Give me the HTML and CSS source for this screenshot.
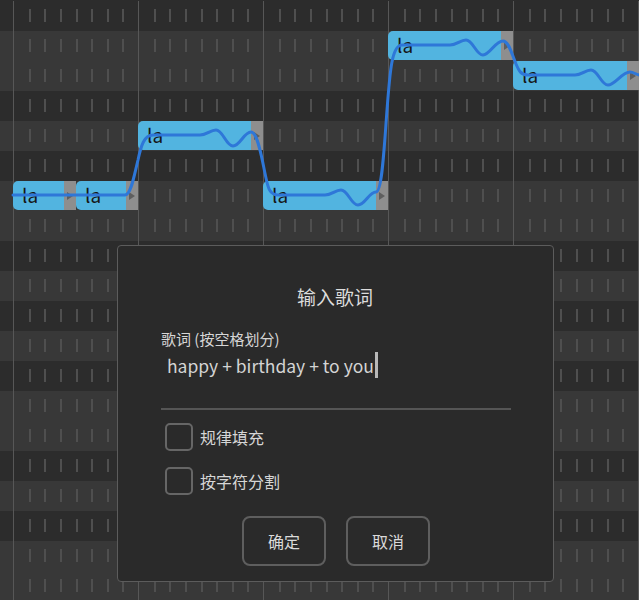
FILE: index.html
```html
<!DOCTYPE html>
<html lang="zh-CN">
<head>
    <meta charset="UTF-8">
    <meta name="viewport" content="width=device-width, initial-scale=1.0">
    <title>输入歌词</title>
    <link rel="stylesheet" href="styles.css">
</head>
<body>

    <div class="roll">
        <!-- 钢琴卷帘的背景行 (黑键 / 白键) -->
        <div class="rows">
            <div class="row black"></div>
            <div class="row"></div>
            <div class="row"></div>
            <div class="row black"></div>
            <div class="row"></div>
            <div class="row black"></div>
            <div class="row"></div>
            <div class="row"></div>
            <div class="row black"></div>
            <div class="row"></div>
            <div class="row black"></div>
            <div class="row"></div>
            <div class="row black"></div>
            <div class="row"></div>
            <div class="row"></div>
            <div class="row black"></div>
            <div class="row"></div>
            <div class="row black"></div>
            <div class="row"></div>
            <div class="row"></div>
        </div>

        <!-- 音符 -->
        <div class="note" style="left:13px;top:181px;width:63px"><div class="note-body">la</div><div class="note-end"></div></div>
        <div class="note" style="left:76px;top:181px;width:62px"><div class="note-body">la</div><div class="note-end"></div></div>
        <div class="note" style="left:138px;top:121px;width:125px"><div class="note-body">la</div><div class="note-end"></div></div>
        <div class="note" style="left:263px;top:181px;width:125px"><div class="note-body">la</div><div class="note-end"></div></div>
        <div class="note" style="left:388px;top:31px;width:125px"><div class="note-body">la</div><div class="note-end"></div></div>
        <div class="note" style="left:513px;top:61px;width:126px"><div class="note-body">la</div><div class="note-end"></div></div>

        <!-- 音高曲线 -->
        <svg class="pitch" width="639" height="600" viewBox="0 0 639 600">
            <path d="M13 195 H125
                     C131 195 134 176 138 160 C141 146 144 135 153 135
                     H200 C207 135 210 130 216 130 C223 130 226 146 233 146 C240 146 244 132 251 132
                     C258 132 262 160 266 178 C268 188 270 195 278 195
                     H325 C332 195 335 190 341 190 C348 190 351 205 358 205 C365 205 369 192 376 192
                     C382 192 384 150 387 110 C390 70 392 45 402 45
                     H450 C457 45 460 40 466 40 C473 40 476 55 483 55 C490 55 495 41 503 41
                     C509 41 512 55 516 64 C519 71 521 75 528 75
                     H575 C582 75 585 70 591 70 C598 70 601 85 608 85 C615 85 622 72 630 72
                     C634 72 636 75 640 75"/>
        </svg>

        <!-- 输入歌词对话框 -->
        <div class="dialog">
            <div class="dialog-title">输入歌词</div>
            <div class="field-label">歌词 (按空格划分)</div>
            <div class="lyric-input">
                <span class="lyric-text">happy + birthday + to you</span><span class="caret"></span>
            </div>
            <div class="divider"></div>

            <label class="check">
                <span class="check-box"></span>
                <span>规律填充</span>
            </label>
            <label class="check check-second">
                <span class="check-box"></span>
                <span>按字符分割</span>
            </label>

            <div class="buttons">
                <button class="btn">确定</button>
                <button class="btn">取消</button>
            </div>
        </div>
    </div>

</body>
</html>
```

FILE: styles.css
```css
* {
    margin: 0;
    padding: 0;
    box-sizing: border-box;
}

body {
    width: 639px;
    height: 600px;
    overflow: hidden;
    background: #2c2c2c;
    font-family: "Noto Sans CJK SC", "Noto Sans", sans-serif;
    color: #d6d6d6;
}

.roll {
    position: relative;
    width: 639px;
    height: 600px;
    overflow: hidden;
}

/* 背景行：刻度短线 + 小节线 */
.rows {
    display: flex;
    flex-direction: column;
    padding-top: 1px;
}

.row {
    height: 30px;
    flex-shrink: 0;
    background-color: #383838;
    background-image:
        linear-gradient(to right, #575757 1px, transparent 1px),
        linear-gradient(to right,
            transparent 16px, #4f4f4f 16px 18px,
            transparent 18px 31px, #4f4f4f 31px 33px,
            transparent 33px 47px, #4f4f4f 47px 49px,
            transparent 49px 63px, #4f4f4f 63px 65px,
            transparent 65px 78px, #4f4f4f 78px 80px,
            transparent 80px 94px, #4f4f4f 94px 96px,
            transparent 96px 109px, #4f4f4f 109px 111px,
            transparent 111px);
    background-size: 125px 100%, 125px 13px;
    background-position: 13px 0, 13px 8px;
    background-repeat: repeat-x;
}

.row.black {
    background-color: #2c2c2c;
}

/* 音符 */
.note {
    position: absolute;
    height: 29px;
    display: flex;
}

.note-body {
    flex: 1;
    background: #52b4e0;
    border-radius: 5px 0 0 5px;
    padding-left: 9px;
    font-size: 19px;
    line-height: 28px;
    color: #161616;
}

.note-end {
    width: 12px;
    background: #8e8e8e;
    display: flex;
    align-items: center;
    justify-content: center;
}

.note-end::after {
    content: "";
    border-left: 6px solid #5e5e5e;
    border-top: 4px solid transparent;
    border-bottom: 4px solid transparent;
}

.pitch {
    position: absolute;
    top: 0;
    left: 0;
    pointer-events: none;
}

.pitch path {
    fill: none;
    stroke: #2e77d8;
    stroke-width: 3;
    stroke-linecap: round;
    stroke-linejoin: round;
}

/* 对话框 */
.dialog {
    position: absolute;
    left: 117px;
    top: 245px;
    width: 437px;
    background: #2a2a2a;
    border: 1px solid #5c5c5c;
    border-radius: 4px;
    padding: 37px 42px 15px 43px;
    display: flex;
    flex-direction: column;
}

.dialog-title {
    text-align: center;
    font-size: 19px;
    line-height: 28px;
    color: #dcdcdc;
    padding-right: 2px;
}

.field-label {
    margin-top: 18px;
    font-size: 15px;
    line-height: 20px;
}

.lyric-input {
    display: flex;
    align-items: center;
    height: 28px;
    margin-top: 2px;
    padding-left: 6px;
    font-size: 17.5px;
    color: #d4d4d4;
}

.caret {
    width: 3px;
    height: 26px;
    margin-left: 1px;
    background: #b8b8b8;
}

.divider {
    margin-top: 29px;
    height: 2px;
    background: #555;
}

.check {
    display: flex;
    align-items: center;
    gap: 7px;
    margin-top: 13px;
    margin-left: 4px;
    font-size: 16px;
    line-height: 28px;
}

.check-second {
    margin-top: 16px;
}

.check-box {
    width: 28px;
    height: 28px;
    border: 2px solid #666;
    border-radius: 5px;
}

.buttons {
    display: flex;
    justify-content: center;
    gap: 20px;
    margin-top: 21px;
}

.btn {
    width: 84px;
    height: 50px;
    background: transparent;
    border: 2px solid #5e5e5e;
    border-radius: 8px;
    font-family: inherit;
    font-size: 16px;
    color: #dadada;
}
```
